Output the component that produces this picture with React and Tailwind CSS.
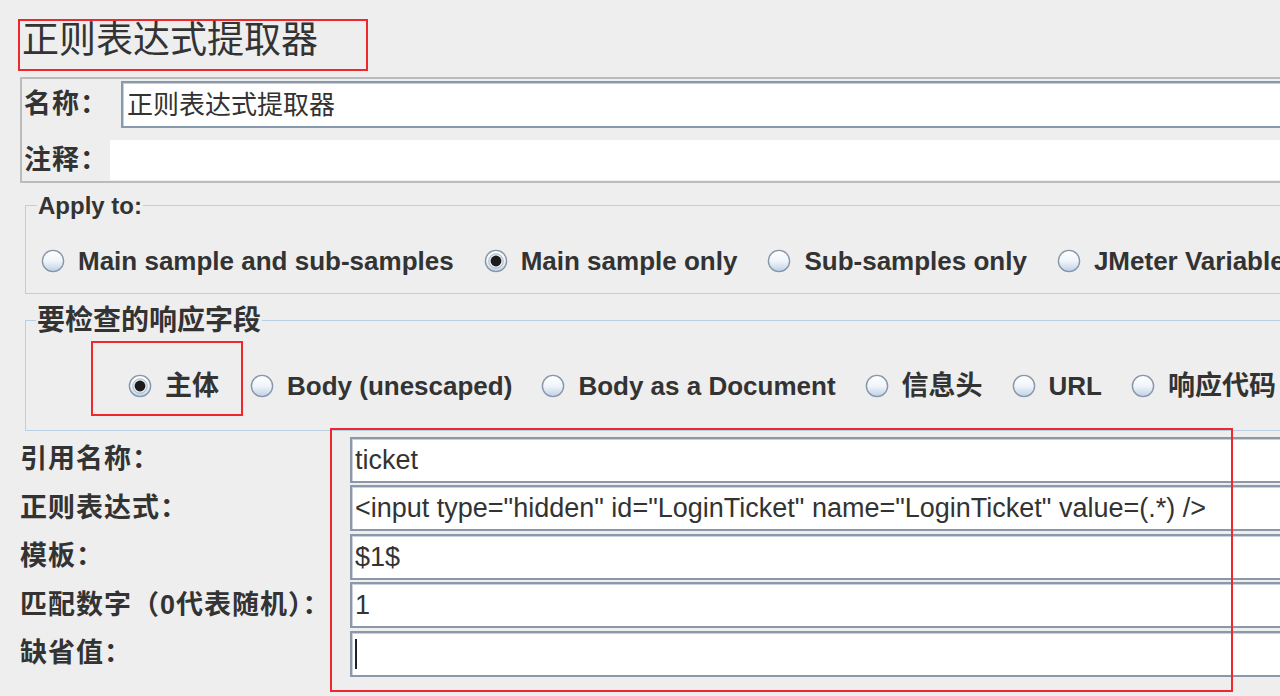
import React from 'react';

const font = "font-['Liberation_Sans','Noto_Sans_CJK_SC',sans-serif]";

function Radio({ checked }) {
  return (
    <svg width="24" height="24" viewBox="0 0 24 24" className="shrink-0">
      <defs>
        <linearGradient id="radioFill" x1="0" y1="0" x2="0" y2="1">
          <stop offset="0" stopColor="#ffffff" />
          <stop offset="0.5" stopColor="#f0f5fa" />
          <stop offset="1" stopColor="#bcd0e6" />
        </linearGradient>
      </defs>
      <circle cx="12" cy="12" r="10.6" fill="url(#radioFill)" stroke="#8796a8" strokeWidth="1.4" />
      {checked && (
        <>
          <circle cx="12" cy="12" r="7.2" fill="#e9eef4" stroke="#a9b6c4" strokeWidth="1" />
          <circle cx="12" cy="12" r="5.4" fill="#1c1c1c" />
        </>
      )}
    </svg>
  );
}

function Option({ label, checked, cjk }) {
  return (
    <div className="flex items-center gap-[13px] shrink-0">
      <Radio checked={checked} />
      <span
        className={`${cjk ? 'text-[27px]' : 'text-[26px]'} leading-[30px] font-bold text-[#333] whitespace-nowrap`}
      >
        {label}
      </span>
    </div>
  );
}

function Field({ value, caret }) {
  return (
    <div className="h-[46px] bg-white border-2 border-[#8a98a8] shadow-[inset_1px_1px_0_#c9d2dc] flex items-center pl-[3px]">
      {caret ? (
        <span className="w-[2px] h-[30px] bg-[#222]" />
      ) : (
        <span className="text-[27px] leading-[30px] text-[#333] whitespace-nowrap">{value}</span>
      )}
    </div>
  );
}

const extractorFields = [
  { label: '引用名称：', value: 'ticket' },
  { label: '正则表达式：', value: '<input type="hidden" id="LoginTicket" name="LoginTicket" value=(.*) />' },
  { label: '模板：', value: '$1$' },
  { label: '匹配数字（0代表随机）：', value: '1' },
  { label: '缺省值：', value: '', caret: true },
];

export default function App() {
  return (
    <div className={`${font} relative w-[1280px] h-[696px] overflow-hidden bg-[#eeeeee] text-[#333]`}>
      <div className="w-[1330px] flex flex-col">
        {/* title */}
        <div className="mt-[19px] ml-[18px] w-[350px] h-[52px] border-2 border-[#f0282c] pl-[2px]">
          <span className="text-[37px] leading-[40px] text-[#333] whitespace-nowrap">正则表达式提取器</span>
        </div>

        {/* name / comment */}
        <div className="mt-[6px] ml-[20px] border-2 border-[#bcbcbc] flex flex-col">
          <div className="flex mt-[2px]">
            <div className="w-[99px] pl-[2px] flex items-center">
              <span className="text-[27px] font-bold whitespace-nowrap tracking-[1px]">名称：</span>
            </div>
            <div className="flex-1 h-[47px] bg-white border-2 border-[#8699ad] shadow-[inset_1px_1px_0_#c5d0db] flex items-center pl-[4px]">
              <span className="text-[26px] leading-[30px] whitespace-nowrap">正则表达式提取器</span>
            </div>
          </div>
          <div className="flex mt-[12px]">
            <div className="w-[88px] pl-[2px] flex items-center">
              <span className="text-[27px] font-bold whitespace-nowrap tracking-[1px]">注释：</span>
            </div>
            <div className="flex-1 h-[40px] bg-white" />
          </div>
        </div>

        {/* apply to */}
        <fieldset className="mt-[9px] ml-[25px] border border-[#b8cfe4]">
          <legend className="ml-[11px] px-[1px] text-[24px] leading-[28px] font-bold whitespace-nowrap">Apply to:</legend>
          <div className="pt-[17px] pb-[8px] pl-[15px]">
            <div className="h-[48px] flex items-center gap-[30px]">
              <Option label="Main sample and sub-samples" />
              <Option label="Main sample only" checked />
              <Option label="Sub-samples only" />
              <Option label="JMeter Variable Name to use" />
            </div>
          </div>
        </fieldset>

        {/* response field */}
        <fieldset className="mt-[12px] ml-[25px] border border-[#b8cfe4]">
          <legend className="ml-[10px] px-[1px] text-[28px] leading-[30px] font-bold whitespace-nowrap">要检查的响应字段</legend>
          <div className="pt-[5px] pb-[14px] pl-[65px]">
            <div className="h-[75px] flex items-stretch">
              <div className="border-2 border-[#f0282c] flex items-center pt-[15px] pl-[35px] pr-[22px]">
                <Option label="主体" checked cjk />
              </div>
              <div className="flex items-center pt-[15px] gap-[29px] ml-[7px]">
                <Option label="Body (unescaped)" />
                <Option label="Body as a Document" />
                <Option label="信息头" cjk />
                <Option label="URL" />
                <Option label="响应代码" cjk />
              </div>
            </div>
          </div>
        </fieldset>

        {/* extractor settings */}
        <div className="mt-[6px] pl-[20px] grid grid-cols-[330px_1fr] gap-y-[2.5px]">
          {extractorFields.map((f) => (
            <React.Fragment key={f.label}>
              <div className="h-[46px] flex items-center">
                <span className="text-[27px] font-bold whitespace-nowrap tracking-[1px]">{f.label}</span>
              </div>
              <Field value={f.value} caret={f.caret} />
            </React.Fragment>
          ))}
        </div>
      </div>

      <div className="absolute left-[330px] top-[428px] w-[903px] h-[264px] border-2 border-[#f0282c] pointer-events-none" />
    </div>
  );
}
